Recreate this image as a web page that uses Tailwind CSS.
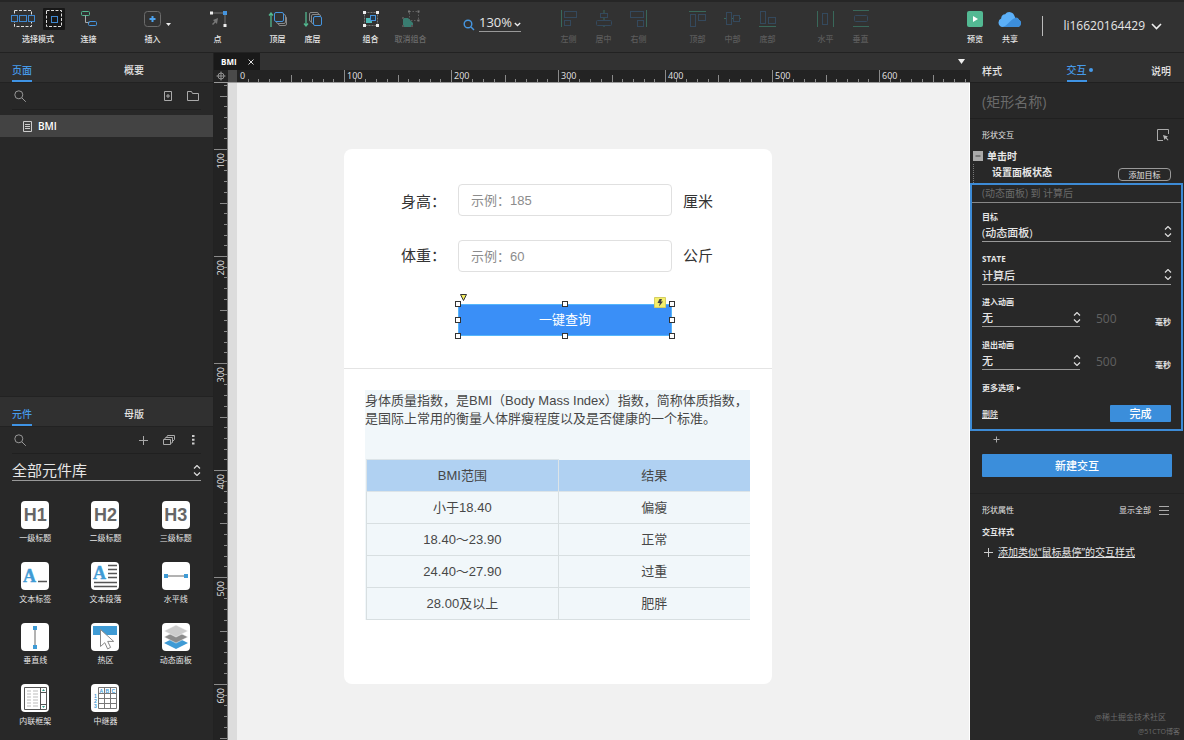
<!DOCTYPE html>
<html lang="zh-CN">
<head>
<meta charset="utf-8">
<title>BMI</title>
<script src="https://cdn.jsdelivr.net/npm/@tailwindcss/browser@4"></script>
</head>
<body class="flex h-screen flex-col overflow-hidden bg-[#282828] font-['Open_Sans','Noto_Sans_CJK_SC',sans-serif] text-[#e6e6e6]">

<!-- Toolbar -->
<header class="flex h-[53px] shrink-0 items-start border-t-2 border-b border-t-[#262626] border-b-[#222] bg-[#323232] pt-[5px] pl-[5px] text-[8px] leading-3 font-medium">
  <button class="flex w-[66px] flex-col items-center gap-[2px]">
    <span class="flex h-6 items-center gap-[8px]">
      <svg class="h-[22px] w-6" viewBox="0 0 24 22" fill="none"><rect x="3.500" y="2.500" width="17" height="16" stroke="#ddd" stroke-dasharray="3 1.500"/><g fill="#323232" stroke="#3f88d0"><rect x=".5" y="7.500" width="6" height="6"/><rect x="8.500" y="7.500" width="7" height="6"/><rect x="17.500" y="7.500" width="6" height="6"/></g></svg>
      <svg class="h-[22px] w-[22px]" viewBox="0 0 22 22" fill="none"><rect width="22" height="22" rx="1" fill="#171717"/><rect x="3.500" y="2.500" width="15" height="16" stroke="#ddd" stroke-dasharray="3 1.500"/><rect x="8.500" y="8.500" width="6" height="6" stroke="#3f88d0"/></svg>
    </span>
    <span>选择模式</span>
  </button>
  <button class="flex w-[35px] flex-col items-center gap-[2px]">
    <svg class="h-6 w-5" viewBox="0 0 20 24" fill="none"><rect x="2.500" y="4.500" width="8" height="4" rx="1" stroke="#52b68f"/><path d="M6.500 8.500v7h4" stroke="#aaa"/><rect x="9.500" y="14.500" width="8" height="4" rx="1" stroke="#4595df"/></svg>
    <span>连接</span>
  </button>
  <button class="relative ml-[29px] flex w-[35px] flex-col items-center gap-[2px]">
    <svg class="h-6 w-5" viewBox="0 0 20 24" fill="none"><rect x="1.500" y="4.500" width="16" height="15" rx="3" stroke="#6b6b6b"/><path d="M9.500 9v6M6.500 12h6" stroke="#4ca2ee" stroke-width="2"/></svg>
    <span>插入</span>
    <svg class="absolute top-4 -right-[1px] h-[3px] w-[5px]" viewBox="0 0 5 3"><path d="M0 0h5L2.500 3z" fill="#eee"/></svg>
  </button>
  <button class="ml-[30px] flex w-[35px] flex-col items-center gap-[2px]">
    <svg class="h-6 w-5" viewBox="0 0 20 24" fill="none"><path d="M3 6h14v12" stroke="#777"/><path d="M2 4.500h3v3H2zM15.500 17h3v3h-3z" fill="#eee"/><path d="M15 4h4v4h-4z" fill="#4595df"/><path d="m10 11-1 6-1.500-1.500L5 18l-1-1 2.500-2.500L5 13z" fill="#777"/></svg>
    <span>点</span>
  </button>
  <button class="ml-[25px] flex w-[35px] flex-col items-center gap-[2px]">
    <svg class="h-6 w-5" viewBox="0 0 20 24" fill="none"><path d="M3 20V6M1 8.500 3 6l2 2.500" stroke="#52b68f" stroke-width="1.300"/><g fill="#323232"><rect x="10.500" y="9.500" width="8" height="9" rx="1.500" stroke="#888"/><rect x="8.500" y="7.500" width="9" height="9" rx="1.500" stroke="#888"/><rect x="6.500" y="5.500" width="9" height="9" rx="1.500" stroke="#4595df"/></g></svg>
    <span>顶层</span>
  </button>
  <button class="flex w-[35px] flex-col items-center gap-[2px]">
    <svg class="h-6 w-5" viewBox="0 0 20 24" fill="none"><path d="M3 5v14M1 16.500 3 19l2-2.500" stroke="#52b68f" stroke-width="1.300"/><rect x="6.500" y="5.500" width="9" height="9" rx="1.500" stroke="#888"/><rect x="8.500" y="7.500" width="9" height="9" rx="1.500" fill="#323232" stroke="#888"/><rect x="10.500" y="9.500" width="8" height="9" rx="1.500" fill="#323232" stroke="#4595df"/></svg>
    <span>底层</span>
  </button>
  <button class="ml-[23px] flex w-[35px] flex-col items-center gap-[2px]">
    <svg class="h-6 w-5" viewBox="0 0 20 24" fill="none"><rect x="3.500" y="5.500" width="13" height="13" stroke="#777" stroke-dasharray="2 1"/><path d="M2 4h3v3H2zM15 4h3v3h-3zM2 17h3v3H2zM15 17h3v3h-3z" fill="#eee"/><rect x="5" y="11" width="6" height="5" fill="#50b8b3"/><rect x="9.500" y="8.500" width="5" height="5" fill="#25394b" stroke="#4595df"/></svg>
    <span>组合</span>
  </button>
  <button class="flex w-[45px] flex-col items-center gap-[2px] text-[#6b6b6b]">
    <svg class="h-6 w-5" viewBox="0 0 20 24" fill="none"><rect x="8.500" y="4.500" width="9" height="9" stroke="#5d5d5d" stroke-dasharray="1.500 1.500"/><path d="M7 3.500h2v2H7zM16.500 3.500h2v2h-2zM16.500 12.500h2v2h-2z" fill="#777"/><path d="M2 11h5l5 5v4H2z" fill="#397c70"/><path d="M1 10h2v2H1zM1 18h2v2H1zM10 18h2v2h-2z" fill="#555"/></svg>
    <span>取消组合</span>
  </button>
  <div class="ml-[30px] flex items-center gap-1 pt-[6px]">
    <svg class="mt-1 h-3 w-3" viewBox="0 0 12 12" fill="none" stroke="#4696e0" stroke-width="1.400"><circle cx="5" cy="5" r="3.800"/><path d="m8 8 3 3"/></svg>
    <button class="flex h-[19px] w-[42px] items-center justify-between border-b border-[#999] text-[13px] font-normal">130%<svg class="mt-1 h-[5px] w-[7px]" viewBox="0 0 7 5" fill="none" stroke="#eee" stroke-width="1.300"><path d="m.8 1 2.700 2.500L6.200 1"/></svg></button>
  </div>
  <div class="ml-[30px] flex text-[#5c5c5c]">
    <button class="flex w-[35px] flex-col items-center gap-[2px]"><svg class="h-6 w-5" viewBox="0 0 20 24" fill="none"><path d="M2.500 3v17" stroke="#39685a"/><g stroke="#34495d"><rect x="5.500" y="4.500" width="12" height="6"/><rect x="5.500" y="13.500" width="6" height="5"/></g></svg><span>左侧</span></button>
    <button class="flex w-[35px] flex-col items-center gap-[2px]"><svg class="h-6 w-5" viewBox="0 0 20 24" fill="none"><path d="M10 3v17" stroke="#39685a"/><g fill="#323232" stroke="#34495d"><rect x="6.500" y="6.500" width="7" height="4"/><rect x="2.500" y="13.500" width="15" height="5" rx="1"/></g></svg><span>居中</span></button>
    <button class="flex w-[35px] flex-col items-center gap-[2px]"><svg class="h-6 w-5" viewBox="0 0 20 24" fill="none"><path d="M17.500 3v17" stroke="#39685a"/><g stroke="#34495d"><rect x="1.500" y="4.500" width="13" height="6"/><rect x="8.500" y="13.500" width="6" height="6"/></g></svg><span>右侧</span></button>
  </div>
  <div class="ml-[24px] flex text-[#5c5c5c]">
    <button class="flex w-[35px] flex-col items-center gap-[2px]"><svg class="h-6 w-5" viewBox="0 0 20 24" fill="none"><path d="M1 4.500h17" stroke="#39685a"/><g stroke="#34495d"><rect x="2.500" y="7.500" width="5" height="12"/><rect x="10.500" y="7.500" width="7" height="6"/></g></svg><span>顶部</span></button>
    <button class="flex w-[35px] flex-col items-center gap-[2px]"><svg class="h-6 w-5" viewBox="0 0 20 24" fill="none"><path d="M1 11.500h17" stroke="#39685a"/><g fill="#323232" stroke="#34495d"><rect x="3.500" y="5.500" width="5" height="12"/><rect x="10.500" y="8.500" width="6" height="6"/></g></svg><span>中部</span></button>
    <button class="flex w-[35px] flex-col items-center gap-[2px]"><svg class="h-6 w-5" viewBox="0 0 20 24" fill="none"><path d="M1 19.500h17" stroke="#39685a"/><g stroke="#34495d"><rect x="2.500" y="4.500" width="5" height="12"/><rect x="10.500" y="10.500" width="7" height="6"/></g></svg><span>底部</span></button>
  </div>
  <div class="ml-[23px] flex text-[#5c5c5c]">
    <button class="flex w-[35px] flex-col items-center gap-[2px]"><svg class="h-6 w-5" viewBox="0 0 20 24" fill="none"><path d="M1.500 4v16M17.500 4v16" stroke="#39685a"/><rect x="6.500" y="6.500" width="5" height="11" stroke="#34495d"/></svg><span>水平</span></button>
    <button class="flex w-[35px] flex-col items-center gap-[2px]"><svg class="h-6 w-5" viewBox="0 0 20 24" fill="none"><path d="M2 3.500h16M2 19.500h16" stroke="#39685a"/><rect x="3.500" y="8.500" width="13" height="6" rx="1" stroke="#34495d"/></svg><span>垂直</span></button>
  </div>
  <div class="ml-auto flex items-start pr-[22px]">
    <button class="flex w-[35px] flex-col items-center gap-[2px]"><svg class="h-6 w-5" viewBox="0 0 20 24"><rect x="2" y="4" width="16" height="16" rx="2" fill="#53b993"/><path d="m8 9 5 3-5 3z" fill="#fff"/></svg><span>预览</span></button>
    <button class="flex w-[35px] flex-col items-center gap-[2px]"><svg class="h-6 w-[26px]" viewBox="0 0 26 24"><path d="M5 20a4.500 4.500 0 0 1-.8-8.500 4 4 0 0 1 3.900-4.300A5.300 5.300 0 0 1 17.500 9c.4.600.6 1.200.7 2 1.400-.6 3 .1 3.500 1.500A4 4 0 0 1 21 20z" fill="#5cb0f8"/><path d="M5 20c5-.2 8-7.500 13.200-9 1.400-.6 3 .1 3.500 1.500A4 4 0 0 1 21 20z" fill="#3c8edc"/></svg><span>共享</span></button>
    <span class="mt-[9px] ml-[15px] h-5 w-px bg-[#bbb]"></span>
    <button class="mt-[9px] ml-[20px] flex items-center gap-[6px] text-[12px] leading-5 font-normal">li16620164429<svg class="h-[7px] w-[11px]" viewBox="0 0 11 7" fill="none" stroke="#eee" stroke-width="1.600"><path d="m1 1 4.500 4.500L10 1"/></svg></button>
  </div>
</header>

<div class="flex min-h-0 flex-1">
  <!-- Left column -->
  <aside class="flex w-[214px] shrink-0 flex-col border-r border-[#222]">
    <section class="min-h-0 flex-1">
      <nav class="flex h-[30px] border-b border-[#222] bg-[#303030] pl-3 text-[10px] font-medium">
        <button class="mr-[92px] h-[29px] border-b-2 border-[#3f93e4] pt-[7px] text-[#469ae9]">页面</button>
        <button class="pt-[6px]">概要</button>
      </nav>
      <div class="mr-3 ml-3 flex h-[27px] items-center border-b border-[#202020]">
        <svg class="ml-[2px] h-3 w-3" viewBox="0 0 12 12" fill="none" stroke="#999"><circle cx="4.800" cy="4.800" r="4"/><path d="m7.800 7.800 4 4"/></svg>
        <button class="mr-[15px] ml-auto" aria-label="添加页面"><svg class="h-[10px] w-2" viewBox="0 0 8 10" fill="none" stroke="#aaa"><path d="M.5.500h7v9h-7zM4 3v4M2 5h4"/></svg></button>
        <button class="mr-[2px]" aria-label="添加文件夹"><svg class="h-[10px] w-3" viewBox="0 0 12 10" fill="none" stroke="#aaa"><path d="M.5.500h4l1 2h6v7H.5z"/></svg></button>
      </div>
      <a href="#bmi" class="mt-[5px] flex h-[22px] items-center gap-[6px] bg-[#434343] pl-[23px] text-[10px] font-semibold text-white">
        <svg class="h-[11px] w-[9px]" viewBox="0 0 9 11" fill="none" stroke="#ccc"><path d="M.5.500h8v10h-8zM2 3.500h5M2 5.500h5M2 7.500h5"/></svg>BMI</a>
    </section>

    <section class="border-t border-[#222] pb-[13px]">
      <nav class="flex h-[30px] border-b border-[#222] bg-[#303030] pl-3 text-[10px] font-medium">
        <button class="mr-[92px] h-[29px] border-b-2 border-[#3f93e4] pt-[7px] text-[#469ae9]">元件</button>
        <button class="pt-[6px]">母版</button>
      </nav>
      <div class="mx-3 flex h-[27px] items-center border-b border-[#202020]">
        <svg class="ml-[2px] h-3 w-3" viewBox="0 0 12 12" fill="none" stroke="#999"><circle cx="4.800" cy="4.800" r="4"/><path d="m7.800 7.800 4 4"/></svg>
        <button class="mr-[15px] ml-auto" aria-label="添加"><svg class="h-[9px] w-[9px]" viewBox="0 0 9 9" stroke="#aaa"><path d="M4.500 0v9M0 4.500h9"/></svg></button>
        <button class="mr-[17px]" aria-label="元件库"><svg class="h-[10px] w-3" viewBox="0 0 12 10" fill="none" stroke="#aaa"><path d="M.5 4.500h7v5h-7zM1.500 4.500l1-2h7v5l-2 1M3.500 2.500l1-2h7v4l-2 2"/></svg></button>
        <button class="mr-[6px]" aria-label="更多"><svg class="h-[10px] w-[3px]" viewBox="0 0 3 10" fill="#ccc"><path d="M0 0h2.500v2H0zM0 3.800h2.500v2H0zM0 7.600h2.500v2H0z"/></svg></button>
      </div>
      <div class="relative mx-3 mt-[5px]">
        <select aria-label="元件库" class="block h-[22px] w-full appearance-none border-b border-[#999] bg-transparent text-[15px] outline-none"><option>全部元件库</option></select>
        <svg class="pointer-events-none absolute top-[6px] right-0 h-[11px] w-2" viewBox="0 0 8 11" fill="none" stroke="#ddd" stroke-width="1.200"><path d="m1 3.500 3-3 3 3M1 7.500l3 3 3-3"/></svg>
      </div>
      <div class="mt-5 mr-[2px] grid grid-cols-3 gap-y-[18px] text-[8px] leading-3">
        <button class="flex h-[43px] flex-col items-center justify-between"><span class="flex h-7 w-7 items-center justify-center rounded bg-white font-['Liberation_Sans',sans-serif] text-[18px] font-bold text-[#666]">H1</span>一级标题</button>
        <button class="flex h-[43px] flex-col items-center justify-between"><span class="flex h-7 w-7 items-center justify-center rounded bg-white font-['Liberation_Sans',sans-serif] text-[18px] font-bold text-[#666]">H2</span>二级标题</button>
        <button class="flex h-[43px] flex-col items-center justify-between"><span class="flex h-7 w-7 items-center justify-center rounded bg-white font-['Liberation_Sans',sans-serif] text-[18px] font-bold text-[#666]">H3</span>三级标题</button>

        <button class="flex h-[43px] flex-col items-center justify-between"><svg class="h-7 w-7 rounded bg-white" viewBox="0 0 28 28"><text x="2" y="20" font-family="Liberation Serif" font-weight="bold" font-size="18" fill="#3f9bd5" stroke="#3f9bd5" stroke-width=".4">A</text><path d="M17 19.500h9" stroke="#555" stroke-width="1.500"/></svg>文本标签</button>
        <button class="flex h-[43px] flex-col items-center justify-between"><svg class="h-7 w-7 rounded bg-white" viewBox="0 0 28 28"><text x="2" y="16.500" font-family="Liberation Serif" font-weight="bold" font-size="18" fill="#3f9bd5" stroke="#3f9bd5" stroke-width=".4">A</text><path d="M17 3.500h9M17 7.500h9M17 11.500h9M17 15.500h9M3 20.500h23M3 24.500h23" stroke="#555" stroke-width="1.500"/></svg>文本段落</button>
        <button class="flex h-[43px] flex-col items-center justify-between"><svg class="h-7 w-7 rounded bg-white" viewBox="0 0 28 28"><path d="M4 14h20" stroke="#666"/><path d="M2 12h4v4H2zM22 12h4v4h-4z" fill="#3f9bd5"/></svg>水平线</button>

        <button class="flex h-[43px] flex-col items-center justify-between"><svg class="h-7 w-7 rounded bg-white" viewBox="0 0 28 28"><path d="M14 4v20" stroke="#666"/><path d="M12 3h4v4h-4zM12 22h4v4h-4z" fill="#3f9bd5"/></svg>垂直线</button>
        <button class="flex h-[43px] flex-col items-center justify-between"><svg class="h-7 w-7 rounded bg-white" viewBox="0 0 28 28"><path d="M2 3h24v9H2z" fill="#3f9bd5"/><path d="M9.500 6.500v17l4.300-3.800 2.800 6.200 3-1.500-2.900-6h6z" fill="#fff" stroke="#888"/></svg>热区</button>
        <button class="flex h-[43px] flex-col items-center justify-between"><svg class="h-7 w-7 rounded bg-white" viewBox="0 0 28 28"><path d="m14 14 12 6-12 6-12-6z" fill="#3f9bd5"/><path d="m14 8 12 6-12 6-12-6z" fill="#8c8c8c" stroke="#fff" stroke-width=".5"/><path d="m14 2 12 6-12 6L2 8z" fill="#ccc" stroke="#fff" stroke-width=".5"/></svg>动态面板</button>

        <button class="flex h-[43px] flex-col items-center justify-between"><svg class="h-7 w-7 rounded bg-white" viewBox="0 0 28 28" fill="none"><path d="M3.500 3.500h22v22h-22zM19.500 3.500v22M19.500 8.500h6M19.500 20.500h6" stroke="#555"/><path d="M6 7h4M12 7h5M6 10h4M12 10h5M6 13h4M12 13h5M6 16h4M12 16h5M6 19h4M12 19h5M6 22h4M12 22h5" stroke="#bbb"/><path d="m21 7 1.500-2L24 7zM21 22h3l-1.500 2z" fill="#2d9b87"/></svg>内联框架</button>
        <button class="flex h-[43px] flex-col items-center justify-between"><svg class="h-7 w-7 rounded bg-white" viewBox="0 0 28 28" fill="none"><path d="M7.500 3.500h18v21h-18zM13.500 3.500v21M19.500 3.500v21M7.500 9.500h18M7.500 14.500h18M7.500 19.500h18" stroke="#777"/><g font-family="Liberation Sans" font-size="5" font-weight="bold" fill="#3f9bd5"><text x="8.500" y="8.500">A</text><text x="14.500" y="8.500">B</text><text x="20.500" y="8.500">C</text><text x="3" y="14">1</text><text x="3" y="19">2</text><text x="3" y="24">3</text></g></svg>中继器</button>
      </div>
    </section>
  </aside>

  <!-- Canvas -->
  <main id="bmi" class="flex min-w-0 flex-1 flex-col">
    <div class="flex h-[17px] items-center bg-[#323232] text-[8px]">
      <div class="flex h-full w-[46px] items-center justify-between bg-[#191919] pr-[6px] pl-[7px] font-bold text-white">BMI<button aria-label="关闭"><svg class="h-[6px] w-[6px]" viewBox="0 0 6 6" stroke="#ddd"><path d="m.5.500 5 5M5.500.500l-5 5"/></svg></button></div>
      <button class="mr-[5px] ml-auto" aria-label="标签列表"><svg class="h-[5px] w-[7px]" viewBox="0 0 7 5"><path d="M0 0h7L3.500 5z" fill="#eee"/></svg></button>
    </div>
    <div class="flex h-[13px] shrink-0 border-b border-[#999] bg-[#232323]">
      <svg class="h-3 w-[14px] shrink-0" viewBox="0 0 14 12" fill="none" stroke="#aaa" stroke-width=".8"><circle cx="7" cy="6" r="3"/><path d="M7 1.500v9M2.500 6h9"/></svg>
      <span class="h-full w-[9px] bg-[#4a4a4a]"></span>
      <svg id="ruler-x" class="h-full min-w-0 flex-1"></svg>
    </div>
    <div class="flex min-h-0 flex-1">
      <svg id="ruler-y" class="h-full w-[14px] shrink-0 border-r border-[#777] bg-[#232323]"></svg>
      <div class="w-[9px] shrink-0 bg-[#dcdcdc]"></div>
      <div class="min-w-0 flex-1 overflow-hidden border-r border-white bg-[#f1f1f1] pt-[66px] pl-[107px]">
        <article class="w-[428px] rounded-lg bg-white pb-16 font-['Liberation_Sans','Noto_Sans_CJK_SC',sans-serif] text-[#333]">
          <div class="flex flex-col items-start border-b border-[#e4e4e4] pt-[35px] pb-8 pl-[57px] text-[15px]">
            <div class="flex h-8 items-center"><label for="height" class="w-[57px] pt-1">身高：</label><input id="height" placeholder="示例：185" class="mr-[11px] h-8 w-[214px] rounded border border-[#e0e0e0] px-3 text-[13px] outline-none placeholder:text-[#8c8c8c]"><span class="pt-1">厘米</span></div>
            <div class="mt-6 flex h-8 items-center"><label for="weight" class="w-[57px]">体重：</label><input id="weight" placeholder="示例：60" class="mr-[11px] h-8 w-[214px] rounded border border-[#e0e0e0] px-3 text-[13px] outline-none placeholder:text-[#8c8c8c]"><span>公斤</span></div>
            <div class="relative mt-8 ml-[57px]">
              <button class="block h-8 w-[214px] border border-[#55b6fb] bg-[#3a8ff7] text-[13px] text-white">一键查询</button>
              <svg class="absolute -top-[10px] left-[2px] h-[7px] w-[7px]" viewBox="0 0 7 7"><path d="M.5.500h6l-3 6z" fill="#f4ed5f" stroke="#333"/></svg>
              <svg class="absolute -top-[7px] right-[6px] h-[11px] w-[12px]" viewBox="0 0 12 11"><path d="M.5.500h11v10H.5z" fill="#f5ef6a" stroke="#d4ce62"/><path d="M5.500 2H8L7 4.500h2L5 9.500 5.800 6H3.500z" fill="#444"/></svg>
              <i class="absolute -top-[3px] -left-[3px] h-[6px] w-[6px] border border-[#333] bg-white"></i>
              <i class="absolute -top-[3px] left-[104px] h-[6px] w-[6px] border border-[#333] bg-white"></i>
              <i class="absolute -top-[3px] -right-[3px] h-[6px] w-[6px] border border-[#333] bg-white"></i>
              <i class="absolute top-[13px] -left-[3px] h-[6px] w-[6px] border border-[#333] bg-white"></i>
              <i class="absolute top-[13px] -right-[3px] h-[6px] w-[6px] border border-[#333] bg-white"></i>
              <i class="absolute -bottom-[3px] -left-[3px] h-[6px] w-[6px] border border-[#333] bg-white"></i>
              <i class="absolute left-[104px] -bottom-[3px] h-[6px] w-[6px] border border-[#333] bg-white"></i>
              <i class="absolute -right-[3px] -bottom-[3px] h-[6px] w-[6px] border border-[#333] bg-white"></i>
            </div>
          </div>
          <div class="mt-[21px] mr-[22px] ml-[21px] bg-[#f1f7fa] pt-[2px] text-[13px] text-[#474747]">
            <p class="h-[67px] leading-[18px]">身体质量指数，是BMI（Body Mass Index）指数，简称体质指数，<br>是国际上常用的衡量人体胖瘦程度以及是否健康的一个标准。</p>
            <div class="pl-px">
              <table class="w-full table-fixed border-collapse text-center">
                <thead><tr class="h-8 bg-[#b0d1f2]"><th class="border border-[#dce4e8] font-normal">BMI范围</th><th class="border-b border-[#dce4e8] font-normal">结果</th></tr></thead>
                <tbody>
                  <tr class="h-8"><td class="border border-[#d8dfe1]">小于18.40</td><td class="border-y border-[#d8dfe1]">偏瘦</td></tr>
                  <tr class="h-8"><td class="border border-[#d8dfe1]">18.40～23.90</td><td class="border-y border-[#d8dfe1]">正常</td></tr>
                  <tr class="h-8"><td class="border border-[#d8dfe1]">24.40～27.90</td><td class="border-y border-[#d8dfe1]">过重</td></tr>
                  <tr class="h-8"><td class="border border-[#d8dfe1]">28.00及以上</td><td class="border-y border-[#d8dfe1]">肥胖</td></tr>
                </tbody>
              </table>
            </div>
          </div>
        </article>
      </div>
    </div>
  </main>

  <!-- Inspector -->
  <aside class="flex w-[214px] shrink-0 flex-col text-[8px] leading-3">
    <nav class="flex h-[30px] shrink-0 justify-between border-b border-[#202020] bg-[#303030] pr-[13px] pl-3 text-[10px] font-medium">
      <button class="pt-[6px]">样式</button>
      <button class="relative h-[29px] border-b-2 border-[#3f93e4] pt-[7px] text-[#469ae9]">交互<i class="absolute top-[15px] -right-[6px] h-1 w-1 rounded-full bg-[#469ae9]"></i></button>
      <button class="pt-[6px]">说明</button>
    </nav>
    <input aria-label="名称" placeholder="(矩形名称)" class="h-9 w-full shrink-0 border-b border-[#202020] px-3 pt-[2px] text-[14px] outline-none placeholder:text-[#6b6b6b]">
    <div class="flex items-center justify-between pt-[10px] pr-[15px] pl-3"><h2>形状交互</h2><svg class="h-3 w-3" viewBox="0 0 12 12" fill="none" stroke="#aaa"><path d="M6 11.500H.5V.5h11V5"/><path d="m6 6 5 1.500-1.500 1L11.500 11l-.8.600-2-2.300L7.500 11z" fill="#bbb" stroke="none"/></svg></div>
    <div class="mt-[7px] flex items-center gap-1 pl-[3px] text-[10px] leading-4 font-bold"><svg class="h-[10px] w-[10px]" viewBox="0 0 10 10"><rect width="10" height="10" fill="#aaa"/><path d="M2.500 5h5" stroke="#444"/></svg>单击时</div>
    <div class="ml-[3px] flex h-[19px] items-start justify-between border-l border-dotted border-[#777] pr-[13px] pl-[18px]"><span class="text-[10px] leading-4 font-bold">设置面板状态</span><button class="mt-[4px] h-[13px] w-[53px] rounded border border-[#999] leading-[11px]">添加目标</button></div>

    <form class="mr-px border-2 border-[#3d8bd6]">
      <p class="h-[18px] border-b border-[#888] pl-[10px] text-[10px] leading-[17px] text-[#6b6b6b]">(动态面板) 到 计算后</p>
      <div class="flex flex-col px-[10px] pt-[8px] pb-[7px] font-medium">
        <label for="target" class="font-bold">目标</label>
        <div class="relative mt-[2px] h-[17px]"><select id="target" class="block h-full w-full appearance-none border-b border-[#999] bg-transparent text-[11px] outline-none"><option>(动态面板)</option></select><svg class="pointer-events-none absolute top-[1px] -right-px h-[11px] w-2" viewBox="0 0 8 11" fill="none" stroke="#ddd" stroke-width="1.200"><path d="m1 3.500 3-3 3 3M1 7.500l3 3 3-3"/></svg></div>
        <label for="state" class="mt-[11px] font-bold">STATE</label>
        <div class="relative mt-[3px] h-[17px]"><select id="state" class="block h-full w-full appearance-none border-b border-[#999] bg-transparent text-[11px] outline-none"><option>计算后</option></select><svg class="pointer-events-none absolute top-[1px] -right-px h-[11px] w-2" viewBox="0 0 8 11" fill="none" stroke="#ddd" stroke-width="1.200"><path d="m1 3.500 3-3 3 3M1 7.500l3 3 3-3"/></svg></div>
        <label for="enter" class="mt-[11px] font-bold">进入动画</label>
        <div class="mt-[2px] flex h-[17px]">
          <div class="relative w-[98px]"><select id="enter" class="block h-full w-full appearance-none border-b border-[#999] bg-transparent text-[11px] outline-none"><option>无</option></select><svg class="pointer-events-none absolute top-[2px] -right-px h-[11px] w-2" viewBox="0 0 8 11" fill="none" stroke="#ddd" stroke-width="1.200"><path d="m1 3.500 3-3 3 3M1 7.500l3 3 3-3"/></svg></div>
          <input aria-label="进入动画时长" value="500" class="ml-4 w-10 text-[12px] font-normal text-[#606060]"><span class="mt-[6px] ml-auto font-bold">毫秒</span>
        </div>
        <label for="exit" class="mt-3 font-bold">退出动画</label>
        <div class="mt-[2px] flex h-[17px]">
          <div class="relative w-[98px]"><select id="exit" class="block h-full w-full appearance-none border-b border-[#999] bg-transparent text-[11px] outline-none"><option>无</option></select><svg class="pointer-events-none absolute top-[2px] -right-px h-[11px] w-2" viewBox="0 0 8 11" fill="none" stroke="#ddd" stroke-width="1.200"><path d="m1 3.500 3-3 3 3M1 7.500l3 3 3-3"/></svg></div>
          <input aria-label="退出动画时长" value="500" class="ml-4 w-10 text-[12px] font-normal text-[#606060]"><span class="mt-[6px] ml-auto font-bold">毫秒</span>
        </div>
        <button type="button" class="mt-3 flex items-center gap-[3px] font-bold">更多选项<svg class="h-1 w-1" viewBox="0 0 4 4"><path d="m0 0 4 2-4 2z" fill="#eee"/></svg></button>
        <div class="mt-[11px] flex items-center justify-between"><button type="button" class="underline">删除</button><button type="button" class="h-[17px] w-[61px] rounded-[1px] bg-[#3b8edb] text-[11px] text-white">完成</button></div>
      </div>
    </form>

    <button class="mt-[5px] ml-[23px] self-start" aria-label="添加动作"><svg class="h-[7px] w-[7px]" viewBox="0 0 7 7" stroke="#aaa"><path d="M3.500.5v6M.5 3.500h6"/></svg></button>
    <button class="mx-3 mt-[11px] h-[23px] shrink-0 rounded-[1px] bg-[#3b8edb] text-[11px] font-medium text-white">新建交互</button>
    <div class="mt-4 flex items-center border-t border-[#222] pt-[10px] pr-[15px] pl-3"><h2>形状属性</h2><button class="ml-auto flex items-center gap-2">显示全部<svg class="h-[9px] w-[10px]" viewBox="0 0 10 9" stroke="#aaa"><path d="M0 .5h10M0 4.500h10M0 8.500h10"/></svg></button></div>
    <h3 class="mt-[10px] pl-3 font-bold">交互样式</h3>
    <a href="#style" class="mt-[6px] flex items-center gap-[5px] pl-[14px] text-[10px] leading-4"><svg class="h-[9px] w-[9px]" viewBox="0 0 9 9" stroke="#ccc"><path d="M4.500 0v9M0 4.500h9"/></svg><span class="underline">添加类似“鼠标悬停”的交互样式</span></a>
    <footer class="mt-auto pr-1 pb-[2px] text-right text-[#6b6b6b]"><p class="mb-[3px] pr-[14px]">@稀土掘金技术社区</p><p class="text-[7px]">@51CTO博客</p></footer>
  </aside>
</div>

<script>
// Both rulers share the 130% zoom: 100 document units span 107 screen pixels.
const NS = 'http://www.w3.org/2000/svg';
function ruler(id, vertical, origin, across) {
  const svg = document.getElementById(id);
  const box = svg.getBoundingClientRect();
  const extent = vertical ? box.height : box.width;
  svg.replaceChildren();
  const add = (tag, attrs, text) => {
    const el = document.createElementNS(NS, tag);
    for (const k in attrs) el.setAttribute(k, attrs[k]);
    if (text) el.textContent = text;
    svg.appendChild(el);
  };
  for (let i = 0; origin + i * 10.7 < extent; i++) {
    const p = Math.round(origin + i * 10.7);
    if (p < 0) continue;
    const len = i % 10 === 0 ? across : i % 5 === 0 ? 7 : 3;
    if (i > 0) add('rect', vertical
      ? { x: across - len, y: p, width: len, height: 1, fill: '#8a8a8a' }
      : { x: p, y: across - len, width: 1, height: len, fill: '#8a8a8a' });
    if (i % 10 === 0 && p + 20 < extent) {
      const style = { fill: '#ddd', 'font-size': 9, 'font-family': 'Noto Sans' };
      if (vertical) add('text', { ...style, transform: `translate(10 ${p + 4}) rotate(-90)`, 'text-anchor': 'end' }, String(i * 10));
      else add('text', { ...style, x: p + 3, y: 9 }, String(i * 10));
    }
  }
}
// Redraw whenever a ruler's box changes size.
const observer = new ResizeObserver(() => {
  ruler('ruler-x', false, 0, 12);
  ruler('ruler-y', true, -41, 13);
});
observer.observe(document.getElementById('ruler-x'));
observer.observe(document.getElementById('ruler-y'));
</script>
</body>
</html>
